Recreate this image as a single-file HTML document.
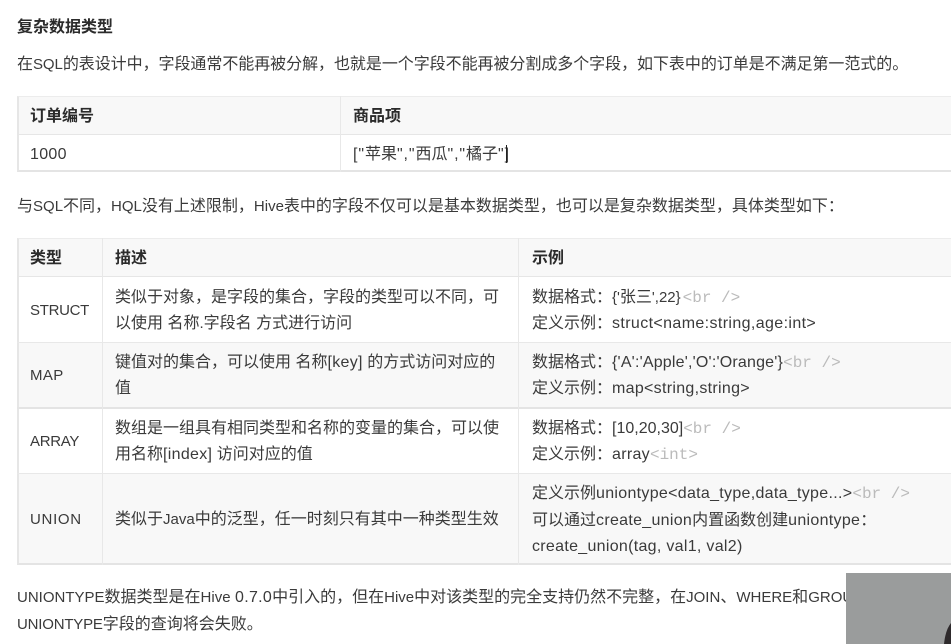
<!DOCTYPE html>
<html lang="zh-CN"><head><meta charset="utf-8"><style>
html,body{margin:0;padding:0;width:951px;height:644px;overflow:hidden;background:#fff}
body{position:relative;font-family:"Liberation Sans","Noto Sans CJK SC",sans-serif;font-size:16px;color:#3a3a3a}
.t{position:absolute;white-space:pre;line-height:26px;height:26px;margin-top:2px}
.u{font-size:15px}
.l{font-size:16px;letter-spacing:.3px}
.q{font-size:16px;letter-spacing:.9px}
.b{font-weight:bold;color:#2b2b2b}
.g{color:#bbb;font-family:"Liberation Mono",monospace;font-size:16px}
.box{position:absolute}
</style></head><body>
<div class="box" style="left:17px;top:96px;width:934px;height:38px;background:#f8f8f8"></div>
<div class="box" style="left:17px;top:96px;width:934px;height:76px;border-left:2px solid #e6e6e6;border-top:1px solid #ececec;border-bottom:2px solid #e4e4e4;box-sizing:border-box"></div>
<div class="box" style="left:17px;top:134px;width:934px;height:1px;background:#e6e6e6"></div>
<div class="box" style="left:340px;top:96px;width:1px;height:76px;background:#e8e8e8"></div>

<div class="box" style="left:17px;top:238px;width:934px;height:38px;background:#f8f8f8"></div>
<div class="box" style="left:17px;top:342px;width:934px;height:66px;background:#f8f8f8"></div>
<div class="box" style="left:17px;top:474px;width:934px;height:91px;background:#f8f8f8"></div>
<div class="box" style="left:17px;top:238px;width:934px;height:327px;border-left:2px solid #e6e6e6;border-top:1px solid #ececec;border-bottom:2px solid #e4e4e4;box-sizing:border-box"></div>
<div class="box" style="left:17px;top:276px;width:934px;height:1px;background:#e6e6e6"></div>
<div class="box" style="left:17px;top:342px;width:934px;height:1px;background:#e8e8e8"></div>
<div class="box" style="left:17px;top:407px;width:934px;height:2px;background:#e4e4e4"></div>
<div class="box" style="left:17px;top:473px;width:934px;height:1px;background:#e8e8e8"></div>
<div class="box" style="left:102px;top:238px;width:1px;height:327px;background:#e8e8e8"></div>
<div class="box" style="left:518px;top:238px;width:1px;height:327px;background:#e8e8e8"></div>

<div class="t b" style="left:17px;top:13px;font-size:16px">复杂数据类型</div>
<div class="t" style="left:17px;top:50px;letter-spacing:-.05px">在<span class="u">SQL</span>的表设计中，字段通常不能再被分解，也就是一个字段不能再被分割成多个字段，如下表中的订单是不满足第一范式的。</div>
<div class="t b" style="left:30px;top:102px">订单编号</div>
<div class="t b" style="left:353px;top:102px">商品项</div>
<div class="t l" style="left:30px;top:140px">1000</div>
<div class="t" style="left:353px;top:140px"><span class="q">["</span>苹果<span class="q">","</span>西瓜<span class="q">","</span>橘子<span class="q">"]</span></div>
<div class="box" style="left:506px;top:145px;width:1px;height:18px;background:#222"></div>
<div class="t" style="left:17px;top:192px">与<span class="u">SQL</span>不同，<span class="u">HQL</span>没有上述限制，<span class="u">Hive</span>表中的字段不仅可以是基本数据类型，也可以是复杂数据类型，具体类型如下：</div>

<div class="t b" style="left:30px;top:244px">类型</div>
<div class="t b" style="left:115px;top:244px">描述</div>
<div class="t b" style="left:532px;top:244px">示例</div>

<div class="t u" style="left:30px;top:296px;letter-spacing:-.3px">STRUCT</div>
<div class="t" style="left:115px;top:283px">类似于对象，是字段的集合，字段的类型可以不同，可</div>
<div class="t" style="left:115px;top:309px">以使用 名称<span class="u">.</span>字段名 方式进行访问</div>
<div class="t" style="left:532px;top:283px">数据格式：<span class="u">{'</span>张三<span class="u">',22}</span><span class="g" style="margin-left:2px">&lt;br /&gt;</span></div>
<div class="t" style="left:532px;top:309px">定义示例：<span class="l" style="letter-spacing:.38px">struct&lt;name:string,age:int&gt;</span></div>

<div class="t u" style="left:30px;top:361px;letter-spacing:.4px">MAP</div>
<div class="t" style="left:115px;top:348px">键值对的集合，可以使用 名称<span class="l">[key]</span> 的方式访问对应的</div>
<div class="t" style="left:115px;top:374px">值</div>
<div class="t" style="left:532px;top:348px">数据格式：<span class="l" style="letter-spacing:.2px">{'A':'Apple','O':'Orange'}</span><span class="g">&lt;br /&gt;</span></div>
<div class="t" style="left:532px;top:374px">定义示例：<span class="l">map&lt;string,string&gt;</span></div>

<div class="t u" style="left:30px;top:427px;letter-spacing:-.3px">ARRAY</div>
<div class="t" style="left:115px;top:414px">数组是一组具有相同类型和名称的变量的集合，可以使</div>
<div class="t" style="left:115px;top:440px">用名称<span class="l">[index]</span> 访问对应的值</div>
<div class="t" style="left:532px;top:414px">数据格式：<span class="l" style="letter-spacing:0">[10,20,30]</span><span class="g">&lt;br /&gt;</span></div>
<div class="t" style="left:532px;top:440px">定义示例：<span class="l">array</span><span class="g">&lt;int&gt;</span></div>

<div class="t u" style="left:30px;top:505px;letter-spacing:.7px">UNION</div>
<div class="t" style="left:115px;top:505px">类似于<span class="u">Java</span>中的泛型，任一时刻只有其中一种类型生效</div>
<div class="t" style="left:532px;top:479px">定义示例<span class="l">uniontype&lt;data_type,data_type...&gt;</span><span class="g">&lt;br /&gt;</span></div>
<div class="t" style="left:532px;top:506px">可以通过<span class="l">create_union</span>内置函数创建<span class="l">uniontype</span>：</div>
<div class="t l" style="left:532px;top:532px">create_union(tag, val1, val2)</div>

<div class="t" style="left:17px;top:583px"><span class="u">UNIONTYPE</span>数据类型是在<span class="u">Hive</span> <span style="font-size:16px;letter-spacing:.3px">0.7.0</span>中引入的，但在<span class="u">Hive</span>中对该类型的完全支持仍然不完整，在<span class="u">JOIN</span>、<span class="u">WHERE</span>和<span class="u">GROUP</span></div>
<div class="t" style="left:17px;top:610px"><span class="u" style="letter-spacing:-.2px">UNIONTYPE</span>字段的查询将会失败。</div>

<div class="box" style="left:846px;top:573px;width:105px;height:71px;background:#9a9c9c"></div>
<svg class="box" style="left:846px;top:573px" width="105" height="71"><path d="M105 50 C101 55 99 62 98 71 L105 71Z" fill="#2e2a2c"/></svg>
</body></html>
